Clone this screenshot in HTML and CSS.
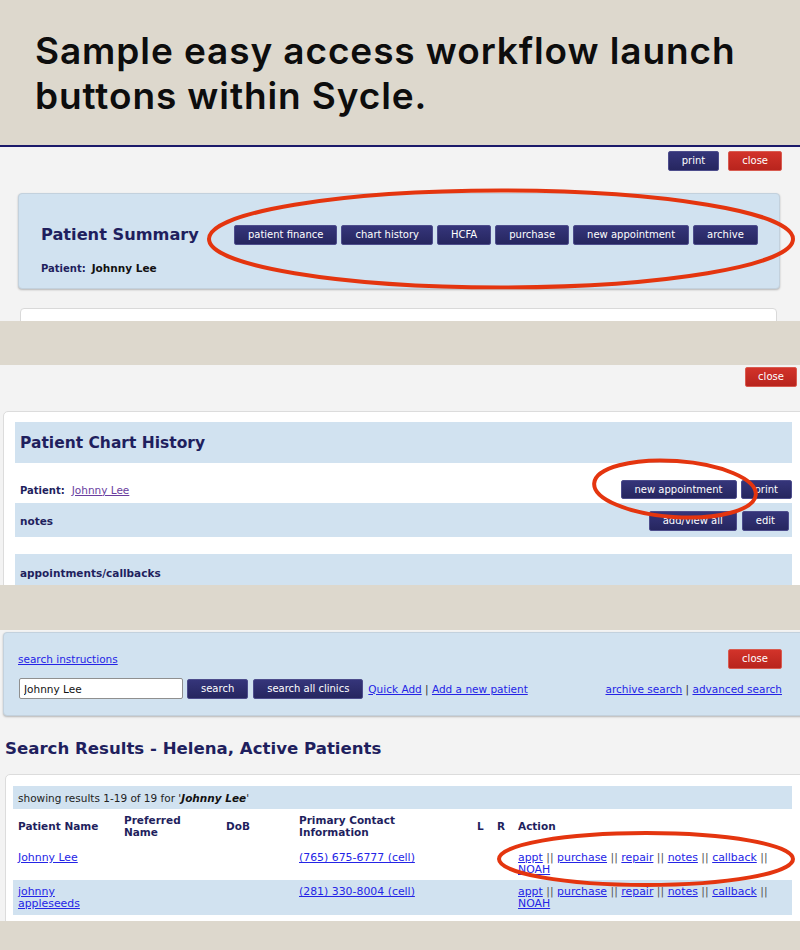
FILE: index.html
```html
<!DOCTYPE html>
<html lang="en">
<head>
<meta charset="utf-8">
<title>Sycle workflow launch buttons</title>
<link rel="stylesheet" href="styles.css">
</head>
<body>
<header class="banner">
  <h1>Sample easy access workflow launch<br>buttons within Sycle.</h1>
</header>

<section class="shot shot1">
  <div class="toolbar">
    <button class="btn btn-print">print</button>
    <button class="btn btn-red">close</button>
  </div>
  <div class="summary">
    <div class="summary-head">
      <h2 class="title">Patient Summary</h2>
      <div class="btn-group">
        <button class="btn">patient finance</button>
        <button class="btn">chart history</button>
        <button class="btn">HCFA</button>
        <button class="btn">purchase</button>
        <button class="btn">new appointment</button>
        <button class="btn">archive</button>
      </div>
    </div>
    <div class="patient-line"><span class="label">Patient:</span><span class="pname">Johnny Lee</span></div>
  </div>
  <div class="stub"></div>
  <svg class="mark" viewBox="0 0 800 176" preserveAspectRatio="none"><ellipse cx="501" cy="93" rx="292" ry="49"/></svg>
</section>

<section class="shot shot2">
  <div class="toolbar2">
    <button class="btn btn-red">close</button>
  </div>
  <div class="card">
    <div class="chart-head"><h2 class="title chart-title">Patient Chart History</h2></div>
    <div class="patient-row">
      <div class="patient-ref"><span class="label">Patient:</span><a class="visited" href="#">Johnny Lee</a></div>
      <div class="btn-group">
        <button class="btn btn-sm">new appointment</button>
        <button class="btn btn-sm">print</button>
      </div>
    </div>
    <div class="bar notes-bar">
      <span class="bar-label">notes</span>
      <div class="btn-group gap5">
        <button class="btn">add/view all</button>
        <button class="btn">edit</button>
      </div>
    </div>
    <div class="bar appt-bar"><span class="bar-label">appointments/callbacks</span></div>
  </div>
  <svg class="mark" viewBox="0 0 800 220" preserveAspectRatio="none"><ellipse cx="675" cy="124" rx="81" ry="28" transform="rotate(4 675 124)"/></svg>
</section>

<section class="shot shot3">
  <div class="search-box">
    <div class="search-row1">
      <a href="#">search instructions</a>
      <button class="btn btn-red">close</button>
    </div>
    <div class="search-row2">
      <input class="search-input" type="text" value="Johnny Lee">
      <button class="btn">search</button>
      <button class="btn">search all clinics</button>
      <span class="links"><a href="#">Quick Add</a> | <a href="#">Add a new patient</a></span>
      <span class="links links-right"><a href="#">archive search</a> | <a href="#">advanced search</a></span>
    </div>
  </div>
  <h2 class="title results-title">Search Results - Helena, Active Patients</h2>
  <div class="results">
    <div class="info-bar">showing results 1-19 of 19 for '<b><i>Johnny Lee</i></b>'</div>
    <table class="grid">
      <colgroup>
        <col class="c-name"><col class="c-pref"><col class="c-dob"><col class="c-contact"><col class="c-l"><col class="c-r"><col class="c-action">
      </colgroup>
      <thead>
        <tr>
          <th>Patient Name</th>
          <th>Preferred<br>Name</th>
          <th>DoB</th>
          <th>Primary Contact<br>Information</th>
          <th>L</th>
          <th>R</th>
          <th>Action</th>
        </tr>
      </thead>
      <tbody>
        <tr>
          <td><a href="#">Johnny Lee</a></td>
          <td></td>
          <td></td>
          <td><a href="#">(765) 675-6777 (cell)</a></td>
          <td></td>
          <td></td>
          <td class="actions"><a href="#">appt</a> <span class="sep">||</span> <a href="#">purchase</a> <span class="sep">||</span> <a href="#">repair</a> <span class="sep">||</span> <a href="#">notes</a> <span class="sep">||</span> <a href="#">callback</a> <span class="sep">||</span> <a href="#">NOAH</a></td>
        </tr>
        <tr class="alt">
          <td><a href="#">johnny appleseeds</a></td>
          <td></td>
          <td></td>
          <td><a href="#">(281) 330-8004 (cell)</a></td>
          <td></td>
          <td></td>
          <td class="actions"><a href="#">appt</a> <span class="sep">||</span> <a href="#">purchase</a> <span class="sep">||</span> <a href="#">repair</a> <span class="sep">||</span> <a href="#">notes</a> <span class="sep">||</span> <a href="#">callback</a> <span class="sep">||</span> <a href="#">NOAH</a></td>
        </tr>
      </tbody>
    </table>
  </div>
  <svg class="mark" viewBox="0 0 800 291" preserveAspectRatio="none"><ellipse cx="646" cy="229" rx="147" ry="26"/></svg>
</section>
</body>
</html>
```

FILE: styles.css
```css
* { box-sizing: border-box; }

html, body {
  margin: 0;
  padding: 0;
}

body {
  background: #ddd8cd;
  font-family: "DejaVu Sans", Verdana, sans-serif;
  font-size: 10.5px;
  color: #222;
  width: 800px;
  overflow: hidden;
}

a { color: #2424e6; }
a.visited { color: #6a3d9e; }

/* ---------- banner ---------- */
.banner {
  height: 145px;
  padding: 28px 0 0 35px;
}
.banner h1 {
  margin: 0;
  font-family: Inter, "Open Sans", sans-serif;
  font-weight: 600;
  font-size: 37px;
  line-height: 45px;
  color: #0d0d0d;
  letter-spacing: 0.9px;
}

/* ---------- common ---------- */
.shot {
  position: relative;
  background: #f3f3f3;
  overflow: hidden;
}

.mark {
  position: absolute;
  left: 0;
  top: 0;
  width: 100%;
  height: 100%;
  pointer-events: none;
}
.mark ellipse {
  fill: none;
  stroke: #e4350f;
  stroke-width: 4;
}

.title {
  margin: 0;
  font-size: 16px;
  font-weight: bold;
  line-height: 20px;
  color: #1f1f5e;
}
.chart-title { font-size: 15.5px; }

.btn {
  font-family: "DejaVu Sans", Verdana, sans-serif;
  font-size: 10px;
  color: #fff;
  height: 20px;
  padding: 0 13px;
  margin: 0;
  border: 1px solid #4d4d8c;
  border-radius: 2px;
  background: linear-gradient(#35357a, #26265f);
  line-height: 18px;
  white-space: nowrap;
  cursor: pointer;
}
.btn-sm { height: 19px; line-height: 17px; }
.btn-red {
  border-color: #d85b50;
  background: linear-gradient(#d2332a, #b8241d);
}

.btn-group {
  display: flex;
  gap: 4px;
}
.btn-group.gap5 { gap: 5px; }

.label {
  font-weight: bold;
  font-size: 10px;
  color: #1f1f5e;
}

/* ---------- shot 1 ---------- */
.shot1 {
  border-top: 2px solid #1b1a6a;
  height: 176px;
}
.toolbar {
  display: flex;
  justify-content: flex-end;
  gap: 9px;
  padding: 4px 18px 0 0;
}
.summary {
  margin: 22px 20px 0 18px;
  height: 96px;
  padding: 31px 0 0 22px;
  background: #d1e2f0;
  border: 1px solid #c3d1dd;
  border-radius: 4px;
  box-shadow: 0 1px 2px rgba(0, 0, 0, 0.25);
}
.summary-head {
  display: flex;
  align-items: center;
  gap: 35px;
  height: 20px;
}
.summary-head .title { font-size: 16.2px; }
.patient-line {
  margin-top: 17px;
  line-height: 12px;
}
.pname {
  margin-left: 6px;
  font-weight: bold;
  font-size: 10.5px;
  color: #111;
}
.stub {
  margin: 19px 23px 0 20px;
  height: 40px;
  background: #fff;
  border: 1px solid #d9d9d9;
  border-radius: 4px;
}

/* ---------- shot 2 ---------- */
.shot2 {
  margin-top: 44px;
  height: 220px;
}
.toolbar2 {
  height: 46px;
  display: flex;
  justify-content: flex-end;
  padding: 2px 3px 0 0;
}
.toolbar2 .btn { width: 52px; padding: 0; }
.card {
  margin: 0 -5px 0 3px;
  height: 200px;
  background: #fff;
  border: 1px solid #dcdcdc;
  border-radius: 5px;
  padding: 10px 12px 0 11px;
}
.chart-head {
  height: 41px;
  background: #d1e2f0;
  display: flex;
  align-items: center;
  padding: 1px 0 0 5px;
}
.patient-row {
  height: 40px;
  display: flex;
  justify-content: space-between;
  align-items: center;
  padding: 17px 0 4px 5px;
}
.patient-ref a { margin-left: 7px; font-size: 10.5px; }
.bar {
  background: #d1e2f0;
  display: flex;
  align-items: center;
  justify-content: space-between;
  padding: 0 3px 0 5px;
}
.bar-label {
  font-weight: bold;
  font-size: 10.5px;
  color: #1f1f5e;
}
.notes-bar {
  height: 34px;
  padding-top: 2px;
}
.appt-bar {
  margin-top: 17px;
  height: 40px;
  align-items: flex-start;
  padding-top: 13px;
}

/* ---------- shot 3 ---------- */
.shot3 {
  margin-top: 45px;
  height: 291px;
}
.search-box {
  margin: 2px -5px 0 3px;
  height: 84px;
  padding: 16px 22px 0 14px;
  background: #d1e2f0;
  border: 1px solid #c3d1dd;
  border-radius: 4px;
  box-shadow: 0 1px 2px rgba(0, 0, 0, 0.25);
}
.search-row1 {
  display: flex;
  justify-content: space-between;
  align-items: center;
  height: 20px;
}
.search-row1 .btn { width: 54px; padding: 0; }
.search-row2 {
  margin-top: 9px;
  display: flex;
  align-items: center;
  gap: 4px;
  height: 21px;
}
.search-row2 .btn + .btn { margin-left: 1px; }
.search-input {
  margin: 0 0 0 1px;
  width: 164px;
  height: 21px;
  border: 1px solid #8f8f8f;
  border-radius: 2px;
  background: #fff;
  padding: 0 0 0 4px;
  font-family: "DejaVu Sans", Verdana, sans-serif;
  font-size: 10.5px;
  color: #111;
}
.links {
  margin-left: 1px;
  color: #333;
}
.links-right { margin-left: auto; }

.results-title {
  margin: 23px 0 0 5px;
  font-size: 16.6px;
}
.results {
  margin: 15px -5px 0 5px;
  height: 200px;
  background: #fff;
  border: 1px solid #dcdcdc;
  border-radius: 5px;
  padding: 11px 12px 0 7px;
}
.info-bar {
  height: 23px;
  background: #d1e2f0;
  display: flex;
  align-items: center;
  padding-left: 5px;
  white-space: pre;
  color: #222;
}
.info-bar b { color: #111; }

.grid {
  width: 100%;
  border-collapse: collapse;
  table-layout: fixed;
}
.c-name { width: 106px; }
.c-pref { width: 102px; }
.c-dob { width: 73px; }
.c-contact { width: 178px; }
.c-l { width: 20px; }
.c-r { width: 21px; }
.grid th {
  height: 37px;
  padding: 0 5px 3px;
  text-align: left;
  font-size: 10.5px;
  font-weight: bold;
  line-height: 12px;
  color: #1f1f5e;
  vertical-align: middle;
}
.grid td {
  padding: 6px 5px 0;
  vertical-align: top;
  line-height: 12px;
  font-size: 10.9px;
}
.grid tbody tr { height: 34px; }
.grid tbody tr.alt { height: 35px; background: #d1e2f0; }
.grid td.actions { padding-right: 8px; }
.sep { color: #555; }
```
